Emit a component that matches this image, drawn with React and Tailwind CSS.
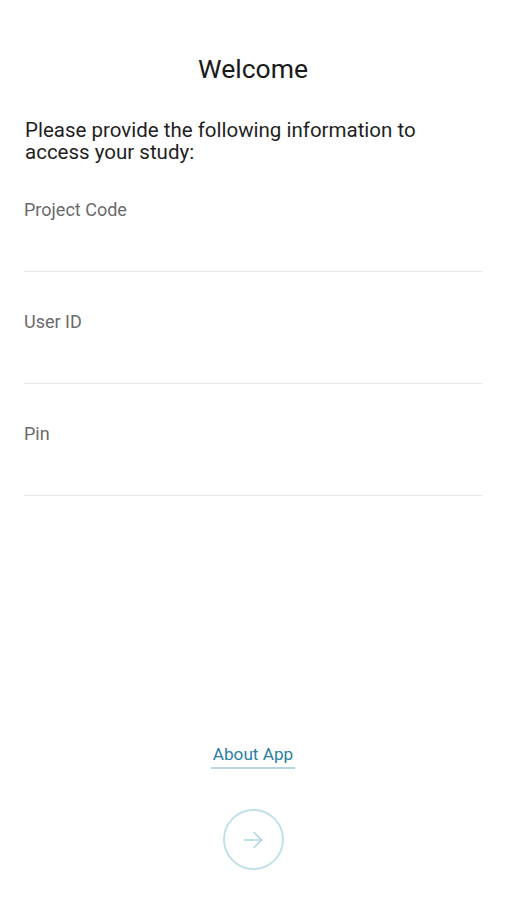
import React from "react";

const fields = ["Project Code", "User ID", "Pin"];

function ArrowButton() {
  return (
    <button className="flex items-center justify-center w-[61px] h-[61px] rounded-full border-2 border-[#bfe1e8] bg-white">
      <svg width="26" height="26" viewBox="0 0 24 24" fill="none" stroke="#a9d6df" strokeWidth="1.4" strokeLinecap="round" strokeLinejoin="round">
        <path d="M4 12h16" />
        <path d="M13 5l7 7-7 7" />
      </svg>
    </button>
  );
}

export default function App() {
  return (
    <div className="flex flex-col w-[506px] h-[900px] bg-white font-['Roboto',sans-serif]">
      <h1 className="mt-[53px] text-[26.5px] leading-[32px] text-center text-[#1a1a1a]">Welcome</h1>

      <p className="mt-[34px] pl-[25px] pr-[60px] text-[20.5px] leading-[22px] text-[#1f1f1f]">
        Please provide the following information to access your study:
      </p>

      {/* Fields */}
      <div className="flex flex-col gap-[40px] mt-[37px] px-[24px]">
        {fields.map((label) => (
          <div key={label} className="flex flex-col border-b border-[#e6e6e6]">
            <label className="text-[18px] leading-[20px] text-[#6b6b6b]">{label}</label>
            <input className="h-[51px] outline-none bg-transparent" />
          </div>
        ))}
      </div>

      <div className="flex flex-col items-center mt-auto mb-[30px]">
        <a className="text-[17.2px] leading-[22px] text-[#2b7fa6] border-b-2 border-[#b9d5e3] pb-[2px] px-[2px]">About App</a>
        <div className="mt-[40px]">
          <ArrowButton />
        </div>
      </div>
    </div>
  );
}
